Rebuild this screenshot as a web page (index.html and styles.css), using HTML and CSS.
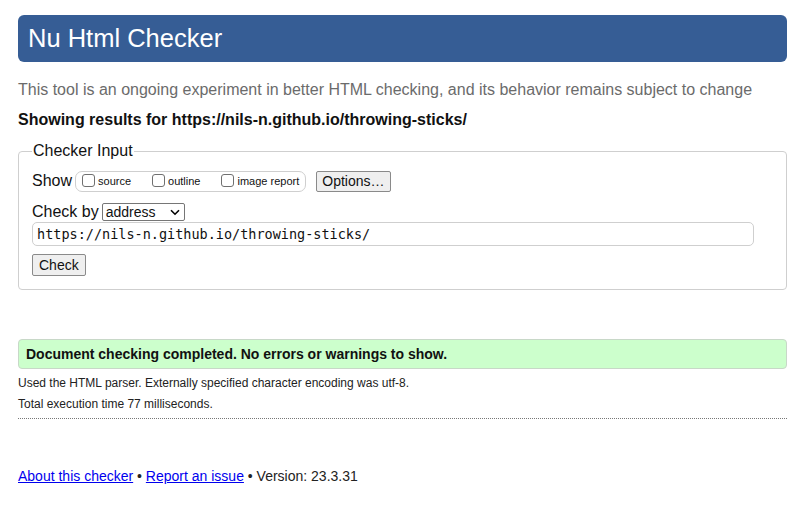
FILE: index.html
```html
<!DOCTYPE html>
<html>
<head>
<meta charset="utf-8">
<title>Nu Html Checker</title>
<link rel="stylesheet" href="styles.css">
</head>
<body>
<div class="page">
  <h1 class="banner">Nu Html Checker</h1>
  <p class="intro">This tool is an ongoing experiment in better HTML checking, and its behavior remains subject to change</p>
  <p class="showing">Showing results for https://nils-n.github.io/throwing-sticks/</p>
  <fieldset class="input">
    <legend>Checker Input</legend>
    <div class="row">
      <span class="lbl">Show</span>
      <span class="showbox">
        <label class="opt"><span class="cb"></span>source</label>
        <label class="opt"><span class="cb"></span>outline</label>
        <label class="opt"><span class="cb"></span>image report</label>
      </span>
      <span class="btn">Options…</span>
    </div>
    <div class="row row2">
      <span class="lbl">Check by</span>
      <span class="select">address<svg width="10" height="7" viewBox="0 0 10 7"><path d="M1 1.2 L5 5.2 L9 1.2" fill="none" stroke="#000" stroke-width="1.6"/></svg></span>
    </div>
    <div class="url">https://nils-n.github.io/throwing-sticks/</div>
    <div class="row row4"><span class="btn">Check</span></div>
  </fieldset>
  <div class="success">Document checking completed. No errors or warnings to show.</div>
  <p class="small">Used the HTML parser. Externally specified character encoding was utf-8.</p>
  <p class="small second">Total execution time 77 milliseconds.</p>
  <div class="dots"></div>
  <p class="footer"><a href="#">About this checker</a> • <a href="#">Report an issue</a> • Version: 23.3.31</p>
</div>
</body>
</html>
```

FILE: styles.css
```css
html, body { margin: 0; padding: 0; background: #fff; }
body { font-family: "Liberation Sans", Arial, sans-serif; color: #111; }
.page { padding: 15px 7px 0 18px; }
.banner {
  margin: 0;
  height: 47px;
  background: #365d95;
  color: #fff;
  border-radius: 6px;
  font-weight: normal;
  font-size: 25.5px;
  line-height: 47px;
  padding-left: 10px;
}
.intro { margin: 18px 0 0; font-size: 16px; color: #6b6b6b; line-height: 20px; }
.showing { margin: 10px 0 0; font-size: 16px; font-weight: bold; line-height: 20px; color: #111; }
.input {
  margin: 12px 0 0;
  border: 1px solid #cfcfcf;
  border-radius: 4px;
  padding: 10px 32px 13px 13px;
  min-width: 0;
}
.input legend { font-size: 16px; padding: 0 1px; color: #111; line-height: 18px; }
.row { display: flex; align-items: center; height: 22px; }
.lbl { font-size: 16px; margin-right: 3px; }
.showbox {
  display: inline-flex; align-items: center;
  border: 1px solid #cfcfcf; border-radius: 7px;
  height: 19px; padding: 0 6px 0 6px; margin-left: 0;
}
.opt { display: inline-flex; align-items: center; font-size: 11px; margin-right: 21px; }
.opt:last-child { margin-right: 0; }
.cb { width: 11px; height: 11px; border: 1px solid #707070; border-radius: 3px; margin-right: 3px; margin-top: -1px; }
.btn {
  display: inline-block; font-size: 14px; border: 1px solid #8a8a8a; border-radius: 2px;
  background: #efefef; padding: 1px 5px; line-height: 17px; margin-left: 10px;
}
.row2 { margin-top: 10px; height: 20px; }
.select {
  display: inline-flex; align-items: center; justify-content: space-between;
  height: 16px; border: 1px solid #767676; border-radius: 2px;
  font-size: 14px; padding: 0 4px 0 3px; box-sizing: content-box; width: 74px;
}
.url {
  margin-top: 0; height: 22px; border: 1px solid #cfcfcf; border-radius: 5px;
  font-family: "DejaVu Sans Mono", monospace; font-size: 13.5px; line-height: 22px; padding-left: 4px;
}
.row4 { margin-top: 8px; }
.row4 .btn { margin-left: 0; line-height: 18px; padding: 1px 6px; }
.success {
  margin-top: 49px; background: #ccffcc; border: 1px solid #c8d8c8; border-radius: 4px;
  height: 28px; line-height: 28px; font-size: 14px; font-weight: bold; padding-left: 7px; color: #111;
}
.small { font-size: 12px; margin: 7px 0 0; line-height: 15px; color: #222; }
.small.second { margin-top: 6px; }
.dots { margin-top: 6px; border-top: 1px dotted #777; }
.footer { margin: 49px 0 0; font-size: 14px; color: #222; }
.footer a { color: #0000ee; }
```
